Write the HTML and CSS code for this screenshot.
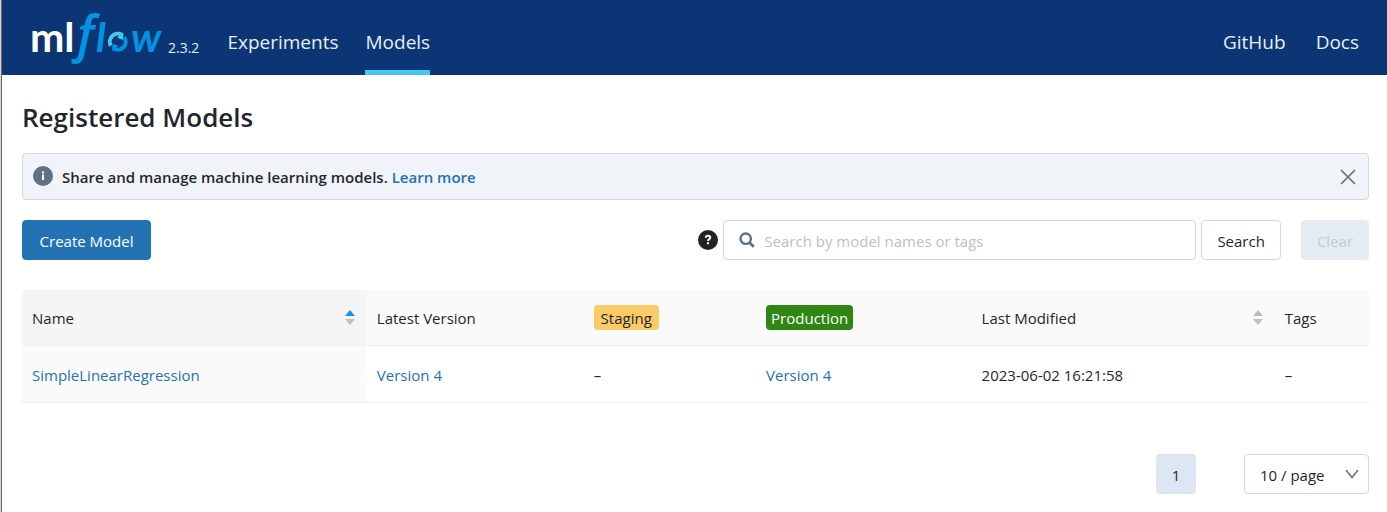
FILE: index.html
```html
<!DOCTYPE html>
<html lang="en">
<head>
<meta charset="utf-8">
<title>Registered Models - MLflow</title>
<link rel="stylesheet" href="styles.css">
</head>
<body>
<header class="topbar">
  <a class="brand" href="#" aria-label="mlflow home">
    <svg class="logo" width="132" height="56" viewBox="0 0 132 56">
      <text class="logo-ml" x="-2" y="44">ml</text>
      <text class="logo-f" x="45" y="44">f</text>
      <text class="logo-flow" x="64" y="44">l</text>
      <text class="logo-flow" x="99" y="44">w</text>
      <path class="ring-light" d="M78.800 37.700A8 8 0 0 1 89.700 26.800"/>
      <path class="ring-light-tip" d="M91.500 24.500L91 32L85 29.500Z"/>
      <path class="ring-dark" d="M92.300 29.100A8 8 0 0 1 81.700 40.600"/>
      <path class="ring-dark-tip" d="M80 43L80.500 35.500L86.500 38Z"/>
    </svg>
  </a>
  <span class="version">2.3.2</span>
  <nav class="nav">
    <a class="nav-link" href="#">Experiments</a>
    <a class="nav-link nav-active" href="#">Models</a>
  </nav>
  <nav class="nav nav-end">
    <a class="nav-link" href="#">GitHub</a>
    <a class="nav-link" href="#">Docs</a>
  </nav>
</header>
<main class="page">
  <h1 class="title">Registered Models</h1>
  <div class="notice">
    <svg class="badge-icon" width="20" height="20" viewBox="0 0 20 20"><circle cx="10" cy="10" r="10" fill="#5f7281"/><path d="M9 5.500h2v2H9zM9 8.500h2V14H9z" fill="#fff"/></svg>
    <p class="notice-text">Share and manage machine learning models. <a class="link" href="#">Learn more</a></p>
    <button class="close" type="button" aria-label="Close"><svg width="16" height="16" viewBox="0 0 16 16"><path d="M1 1L15 15M15 1L1 15" stroke="#5f7281" stroke-width="1.700"/></svg></button>
  </div>
  <form class="toolbar">
    <button class="btn btn-primary" type="button">Create Model</button>
    <svg class="help" width="20" height="20" viewBox="0 0 20 20"><circle cx="10" cy="10" r="10" fill="#222"/><path d="M7.700 7.800C7.800 6.300 8.700 5.800 10 5.800C11.500 5.800 12.300 6.600 12.300 7.600C12.300 9.200 10 9.100 10 11" fill="none" stroke="#fff" stroke-width="1.900"/><path d="M9 12.300h2v2H9z" fill="#fff"/></svg>
    <label class="search">
      <svg width="16" height="16" viewBox="0 0 16 16" fill="none" stroke="#5f7281"><circle cx="6.700" cy="6.700" r="5.200" stroke-width="2.400"/><path d="M10.400 10.400L14.800 14.800" stroke-width="2.800"/></svg>
      <input class="search-input" type="text" placeholder="Search by model names or tags" aria-label="Search models">
    </label>
    <button class="btn" type="button">Search</button>
    <button class="btn btn-clear" type="button" disabled>Clear</button>
  </form>
  <table class="models">
    <colgroup><col class="c-name"><col class="c-version"><col class="c-staging"><col class="c-production"><col class="c-modified"><col class="c-tags"></colgroup>
    <thead>
      <tr>
        <th class="sorted"><div class="sort-head">Name <svg width="10" height="16" viewBox="0 0 10 16"><path d="M0 6L5 0L10 6Z" fill="#1890ff"/><path d="M0 9L5 15L10 9Z" fill="#bfbfbf"/></svg></div></th>
        <th>Latest Version</th>
        <th><span class="stage stage-staging">Staging</span></th>
        <th><span class="stage stage-production">Production</span></th>
        <th><div class="sort-head">Last Modified <svg width="10" height="16" viewBox="0 0 10 16" fill="#bfbfbf"><path d="M0 6L5 0L10 6Z"/><path d="M0 9L5 15L10 9Z"/></svg></div></th>
        <th>Tags</th>
      </tr>
    </thead>
    <tbody>
      <tr>
        <td class="sorted"><a class="link" href="#">SimpleLinearRegression</a></td>
        <td><a class="link" href="#">Version 4</a></td>
        <td>–</td>
        <td><a class="link" href="#">Version 4</a></td>
        <td>2023-06-02 16:21:58</td>
        <td>–</td>
      </tr>
    </tbody>
  </table>
  <div class="pager">
    <button class="page-number" type="button">1</button>
    <div class="page-size">
      <select class="page-select" aria-label="Page size"><option>10 / page</option></select>
      <svg class="chevron" width="14" height="10" viewBox="0 0 14 10"><path d="M1 1L7 8.500L13 1" fill="none" stroke="#5f7281" stroke-width="1.500"/></svg>
    </div>
  </div>
</main>
</body>
</html>
```
FILE: styles.css
```css
* {
  box-sizing: border-box;
}

html {
  border-left: 1px solid #d4d4d4;
  min-height: 100%;
  display: flex;
}

body {
  margin: 0;
  flex: 1;
  border-left: 1px solid #6b6b6b;
  background: #fff;
  color: #1f272d;
  font: 15px/24px "Open Sans", "Noto Sans", sans-serif;
}

button,
input,
select {
  font: inherit;
  color: inherit;
}

.topbar {
  display: flex;
  height: 75px;
  padding: 0 28px 0 30px;
  background: #0b3574;
  color: #e8eef6;
}

.logo {
  display: block;
  margin-top: 8px;
  overflow: visible;
}

.logo-ml,
.logo-flow {
  font: 700 41px Lato, sans-serif;
  fill: #fff;
}

.logo-flow {
  font-style: italic;
  fill: #0194e2;
}

.logo-f {
  font: italic 600 50px "Open Sans", sans-serif;
  fill: #0194e2;
}

.ring-light,
.ring-dark {
  fill: none;
  stroke: #43c9ed;
  stroke-width: 4;
}

.ring-dark {
  stroke: #0194e2;
}

.ring-light-tip {
  fill: #43c9ed;
}

.ring-dark-tip {
  fill: #0194e2;
}

.version {
  margin: 36px 28px 0 4px;
  font-size: 14px;
}

.nav {
  display: flex;
  gap: 27px;
}

.nav-end {
  gap: 30px;
  margin-left: auto;
}

.nav-link {
  padding-top: 30px;
  color: inherit;
  font-size: 19px;
  text-decoration: none;
}

.nav-active {
  border-bottom: 5px solid #43c9ed;
}

.page {
  padding: 24px 18px 18px 20px;
}

.title {
  margin: 0 0 18px;
  font-size: 26px;
  line-height: 36px;
  font-weight: 600;
}

.link {
  color: #2272b4;
  text-decoration: none;
}

.notice {
  display: flex;
  align-items: center;
  gap: 9px;
  height: 47px;
  padding: 0 12px 0 10px;
  border: 1px solid #cdd9e5;
  border-radius: 4px;
  background: #f0f4f8;
  font-weight: 600;
}

.badge-icon {
  margin-bottom: 2px;
}

.notice-text {
  flex: 1;
  margin: 0;
}

.close {
  padding: 0;
  border: 0;
  background: none;
  line-height: 0;
}

.toolbar {
  display: flex;
  align-items: center;
  gap: 5px;
  margin: 20px 0 30px;
}

.btn {
  height: 40px;
  padding: 2px 15px 0;
  border: 1px solid #cdd9e5;
  border-radius: 4px;
  background: #fff;
}

.btn-primary {
  min-width: 129px;
  border-color: #2272b4;
  background: #2272b4;
  color: #fff;
}

.btn-clear {
  margin-left: 15px;
  border-color: #e4ebf1;
  background: #e4ebf1;
  color: #bfcbd8;
}

.help {
  margin-left: auto;
}

.search {
  display: flex;
  align-items: center;
  gap: 9px;
  flex: 0 1 473px;
  height: 40px;
  padding: 0 15px;
  border: 1px solid #cdd9e5;
  border-radius: 4px;
}

.search-input {
  flex: 1;
  min-width: 0;
  padding: 2px 0 0;
  border: 0;
  outline: 0;
  background: none;
}

.search-input::placeholder {
  color: #bfbfbf;
}

.models {
  width: 100%;
  table-layout: fixed;
  border-collapse: separate;
  border-spacing: 0;
}

.c-name { width: 25.6%; }
.c-version { width: 16.1%; }
.c-staging { width: 12.8%; }
.c-production { width: 16%; }
.c-modified { width: 22.5%; }
.c-tags { width: 7%; }

.models th,
.models td {
  padding: 17px 10px 15px;
  border-bottom: 1px solid #f0f0f0;
  font-weight: 400;
  text-align: left;
}

.models th {
  padding: 15px 10px 14px;
  line-height: 26px;
  background: #fafafa;
}

.models .sorted {
  background: #fafafa;
}

.models th.sorted {
  background: #f5f5f5;
}

.sort-head {
  display: flex;
  align-items: center;
  justify-content: space-between;
  padding-right: 2px;
}

.stage {
  display: inline-block;
  min-width: 65px;
  padding: 1px 5px 0;
  border-radius: 4px;
  line-height: 24px;
  text-align: center;
}

.stage-staging {
  background: #fbcb67;
}

.stage-production {
  background: #308613;
  color: #fff;
}

.pager {
  display: flex;
  justify-content: flex-end;
  gap: 48px;
  margin-top: 51px;
}

.page-number {
  width: 40px;
  height: 40px;
  padding: 2px 0 0;
  border: 0;
  border-radius: 4px;
  background: #dce7f3;
}

.page-size {
  position: relative;
}

.page-select {
  appearance: none;
  width: 125px;
  height: 40px;
  padding: 2px 15px 0;
  border: 1px solid #cdd9e5;
  border-radius: 4px;
  background: #fff;
}

.chevron {
  position: absolute;
  top: 15px;
  right: 10px;
  pointer-events: none;
}
```
